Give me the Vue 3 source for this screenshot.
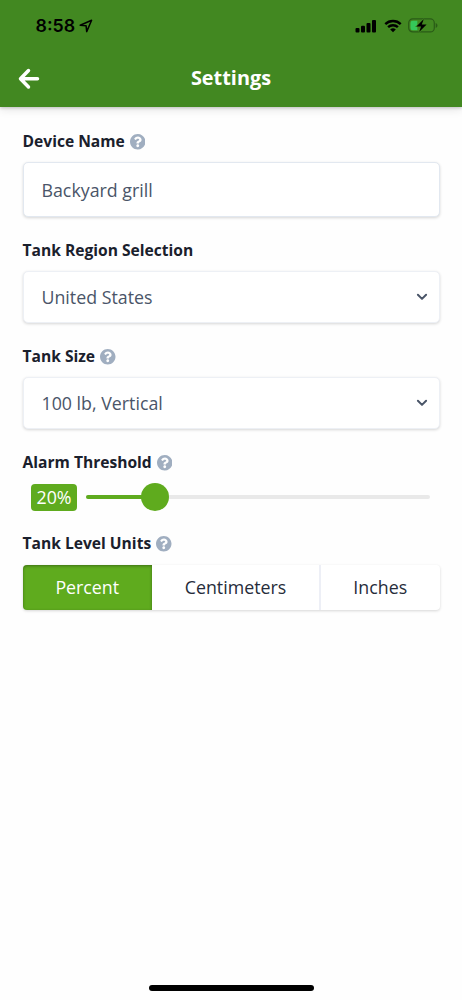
<script setup>
import { ref } from 'vue'

const deviceName = ref('Backyard grill')
const threshold = ref(20)
const units = ['Percent', 'Centimeters', 'Inches']
const unit = ref('Percent')
const fields = [
  { label: 'Device Name', value: deviceName.value, help: true, kind: 'text' },
  { label: 'Tank Region Selection', value: 'United States', help: false, kind: 'select' },
  { label: 'Tank Size', value: '100 lb, Vertical', help: true, kind: 'select' },
]
const helpPath =
  'M504 256c0 137-111 248-248 248S8 393 8 256C8 119 119 8 256 8s248 111 248 248zM262.7 90c-54.5 0-89.3 23-116.5 63.800-3.500 5.300-2.400 12.400 2.700 16.300l34.700 26.300c5.200 3.900 12.600 3 16.700-2.100 17.900-22.700 30.100-35.800 57.300-35.800 20.400 0 45.700 13.100 45.700 33 0 15-12.400 22.700-32.500 34C247.100 238.500 216 254.900 216 296v4c0 6.600 5.400 12 12 12h56c6.600 0 12-5.400 12-12v-1.300c0-28.500 83.200-29.600 83.200-106.700 0-58-60.200-102-116.500-102zM256 338c-25.400 0-46 20.600-46 46s20.600 46 46 46 46-20.600 46-46-20.600-46-46-46z'
</script>

<template>
  <div class="screen">
    <header class="header">
      <div class="status">
        <div class="clock">
          <span>8:58</span>
          <svg class="location" width="14" height="14" viewBox="0 0 14 14">
            <path d="M1.200 6.300 12.600 1.200 7.700 12.600 7.100 6.800Z" fill="none" stroke="#000" stroke-width="1.500" stroke-linejoin="round" />
          </svg>
        </div>
        <div class="indicators">
          <svg width="22" height="14" viewBox="0 0 22 14">
            <rect x="0.500" y="8.900" width="4" height="4.600" rx="1" />
            <rect x="6" y="6.700" width="4" height="6.800" rx="1" />
            <rect x="11.500" y="4" width="4" height="9.500" rx="1" />
            <rect x="17" y="0.900" width="4" height="12.600" rx="1" />
          </svg>
          <svg width="18" height="14" viewBox="0 0 18 14">
            <path d="M1.300 5.100a11 11 0 0 1 15.400 0M4.100 8.200a7 7 0 0 1 9.800 0" fill="none" stroke="#000" stroke-width="2.400" />
            <path d="M9 13.300 6.200 10.500a4 4 0 0 1 5.600 0Z" />
          </svg>
          <svg width="30" height="15" viewBox="0 0 30 15">
            <rect x="0.700" y="0.900" width="25.600" height="13" rx="4" fill="none" stroke="#2a5b17" stroke-width="1.200" />
            <path d="M27.700 5v5c2.300-.8 2.300-4.200 0-5Z" fill="#2a5b17" />
            <path d="M4.800 2.700H9.300V12.200H4.800Q2.500 12.200 2.500 9.900V5Q2.500 2.700 4.800 2.700Z" fill="#35c759" />
            <path d="M15.800.900 8.400 8.400h4.700l-2 5.700 7.500-7.600h-4.800Z" stroke="#428821" stroke-width="1.200" paint-order="stroke" />
          </svg>
        </div>
      </div>
      <div class="titlebar">
        <svg class="back" width="22" height="22" viewBox="0 0 22 22">
          <path d="M10.500 2.500 2.500 10.800 10.500 19M3 10.800H19.500" fill="none" stroke="#fff" stroke-width="3.500" stroke-linecap="round" stroke-linejoin="round" />
        </svg>
        <h1>Settings</h1>
      </div>
    </header>

    <main class="form">
      <section v-for="f in fields" :key="f.label" class="field">
        <div class="label">
          {{ f.label }}
          <svg v-if="f.help" class="help" viewBox="8 8 496 496"><path :d="helpPath" /></svg>
        </div>
        <div class="control" :class="f.kind">
          <span>{{ f.value }}</span>
          <svg v-if="f.kind === 'select'" width="12" height="8" viewBox="0 0 12 8">
            <path d="M1.900 1.800 6 5.900 10.100 1.800" fill="none" stroke="#4a5568" stroke-width="2" stroke-linecap="round" stroke-linejoin="round" />
          </svg>
        </div>
      </section>

      <section class="alarm">
        <div class="label">
          Alarm Threshold
          <svg class="help" viewBox="8 8 496 496"><path :d="helpPath" /></svg>
        </div>
        <div class="slider-row">
          <span class="badge">{{ threshold }}%</span>
          <div class="track">
            <div class="fill" :style="{ width: threshold + '%' }"><i class="knob"></i></div>
          </div>
        </div>
      </section>

      <section>
        <div class="label">
          Tank Level Units
          <svg class="help" viewBox="8 8 496 496"><path :d="helpPath" /></svg>
        </div>
        <div class="segments">
          <button v-for="u in units" :key="u" :class="{ active: u === unit }" @click="unit = u">{{ u }}</button>
        </div>
      </section>
    </main>
    <div class="home"></div>
  </div>
</template>

<style>
body { margin: 0; background: #fefefe; }
</style>

<style scoped>
.screen {
  box-sizing: border-box;
  width: 462px;
  height: 1000px;
  display: flex;
  flex-direction: column;
  align-items: stretch;
  overflow: hidden;
  background: #fefefe;
  font-family: "Open Sans", sans-serif;
  color: #1a202c;
}
.header {
  height: 107px;
  flex: none;
  background: #428821;
  box-shadow: 0 1px 3px rgba(0, 0, 0, 0.2), 0 4px 8px rgba(0, 0, 0, 0.08);
}
.status {
  height: 51px;
  display: flex;
  justify-content: space-between;
  padding: 0 24px 0 35.500px;
}
.clock {
  display: flex;
  align-items: center;
  gap: 4px;
  font: 600 17.800px/51px Inter, sans-serif;
  color: #000;
}
.indicators { display: flex; align-items: center; gap: 6.500px; }
.titlebar {
  display: grid;
  grid-template-columns: 24px 1fr 24px;
  align-items: center;
  height: 56px;
  padding: 0 17.500px;
}
h1 {
  margin: -3px 0 0;
  text-align: center;
  color: #fff;
  font-size: 19.900px;
  line-height: 54px;
  font-weight: 700;
}
.form { padding: 23px 22.500px 0; flex: 1; }
.label {
  display: flex;
  align-items: center;
  gap: 5px;
  height: 22px;
  font-size: 15.600px;
  line-height: 22px;
  font-weight: 700;
}
.help { width: 15.500px; height: 15.500px; margin-top: 2px; fill: #a0aec0; }
.field { margin-bottom: 22px; }
.control {
  box-sizing: border-box;
  display: flex;
  align-items: center;
  justify-content: space-between;
  margin-top: 10px;
  height: 55px;
  padding: 0 11px 0 18px;
  border: 1px solid #e2e8f0;
  border-radius: 5px;
  background: #fff;
  box-shadow: 0 1px 3px rgba(0, 0, 0, 0.16);
  font-size: 17.800px;
  color: #4a5568;
}
.control.select { height: 52px; border-color: #edf0f5; }
.control.select span { margin-top: -1px; }
.slider-row { display: flex; align-items: center; height: 28px; margin: 10px 9.500px 0 8.500px; gap: 9px; }
.badge {
  width: 46px;
  height: 27px;
  border-radius: 4px;
  background: #5fab1e;
  color: #fff;
  text-align: center;
  font-size: 17.800px;
  line-height: 26px;
}
.track { flex: 1; height: 4.500px; border-radius: 3px; background: #e9e9e9; }
.fill { position: relative; height: 100%; border-radius: 3px; background: #5fab1e; }
.knob {
  position: absolute;
  right: -14px;
  top: 50%;
  width: 28px;
  height: 28px;
  margin-top: -14px;
  border-radius: 50%;
  background: #5fab1e;
}
.alarm { margin-bottom: 21px; }
.segments {
  display: grid;
  grid-template-columns: 129.500px 167px 120.500px;
  margin-top: 10.500px;
  height: 45px;
  border-radius: 4px;
  background: #fff;
  box-shadow: 0 1px 3px rgba(0, 0, 0, 0.16);
}
button {
  border: 0;
  border-left: 2px solid #edeff6;
  background: none;
  padding: 0;
  font: 400 17.800px/45px "Open Sans", sans-serif;
  color: #262c3a;
}
button.active {
  border: 0;
  border-radius: 4px 0 0 4px;
  background: #5fab1e;
  color: #fff;
  box-shadow: inset 0 1px 3px rgba(0, 0, 0, 0.35);
}
button.active + button { border-left: 0; }
.home { flex: none; align-self: center; width: 165px; height: 6px; margin-bottom: 9px; border-radius: 3px; background: #000; }
</style>
